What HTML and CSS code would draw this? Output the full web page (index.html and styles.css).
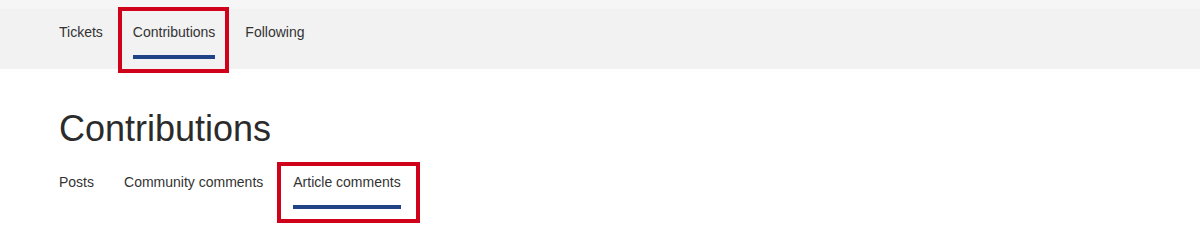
FILE: index.html
```html
<!DOCTYPE html>
<html lang="en">
<head>
<meta charset="utf-8">
<title>Contributions</title>
<link rel="stylesheet" href="styles.css">
</head>
<body>
<header class="header">
  <div class="top-strip"></div>
  <nav class="nav">
    <a class="tab" href="#">Tickets</a>
    <a class="tab active highlight-top" href="#">Contributions</a>
    <a class="tab" href="#">Following</a>
  </nav>
</header>
<main class="main">
  <h1 class="title">Contributions</h1>
  <nav class="subnav">
    <a class="tab" href="#">Posts</a>
    <a class="tab" href="#">Community comments</a>
    <a class="tab active highlight-sub" href="#">Article comments</a>
  </nav>
</main>
</body>
</html>
```
FILE: styles.css
```css
html, body {
  margin: 0;
  padding: 0;
  background: #ffffff;
  font-family: "Liberation Sans", Arial, sans-serif;
  color: #333333;
}

body {
  min-height: 241px;
}

.top-strip {
  height: 9px;
  background: #f6f6f6;
}

.nav {
  display: flex;
  gap: 30px;
  padding: 0 59px 10px;
  background: #f2f2f2;
}

.subnav {
  display: flex;
  gap: 30px;
}

.tab {
  position: relative;
  display: block;
  padding: 13px 0;
  font-size: 14px;
  line-height: 20px;
  color: #333333;
  text-decoration: none;
  border-bottom: 4px solid transparent;
}

.tab.active {
  border-bottom-color: #1f4386;
}

.highlight-top::after,
.highlight-sub::after {
  content: "";
  position: absolute;
  border: 4px solid #d0021b;
  pointer-events: none;
}

.highlight-top::after {
  top: -2px;
  left: -15px;
  right: -14px;
  bottom: -18px;
}

.highlight-sub::after {
  top: 3px;
  left: -16px;
  right: -19px;
  bottom: -18px;
}

.main {
  padding: 0 59px 32px;
}

.title {
  margin: 39px 0 9px;
  font-size: 36px;
  line-height: 42px;
  font-weight: normal;
  color: #2b2b2b;
}
```
